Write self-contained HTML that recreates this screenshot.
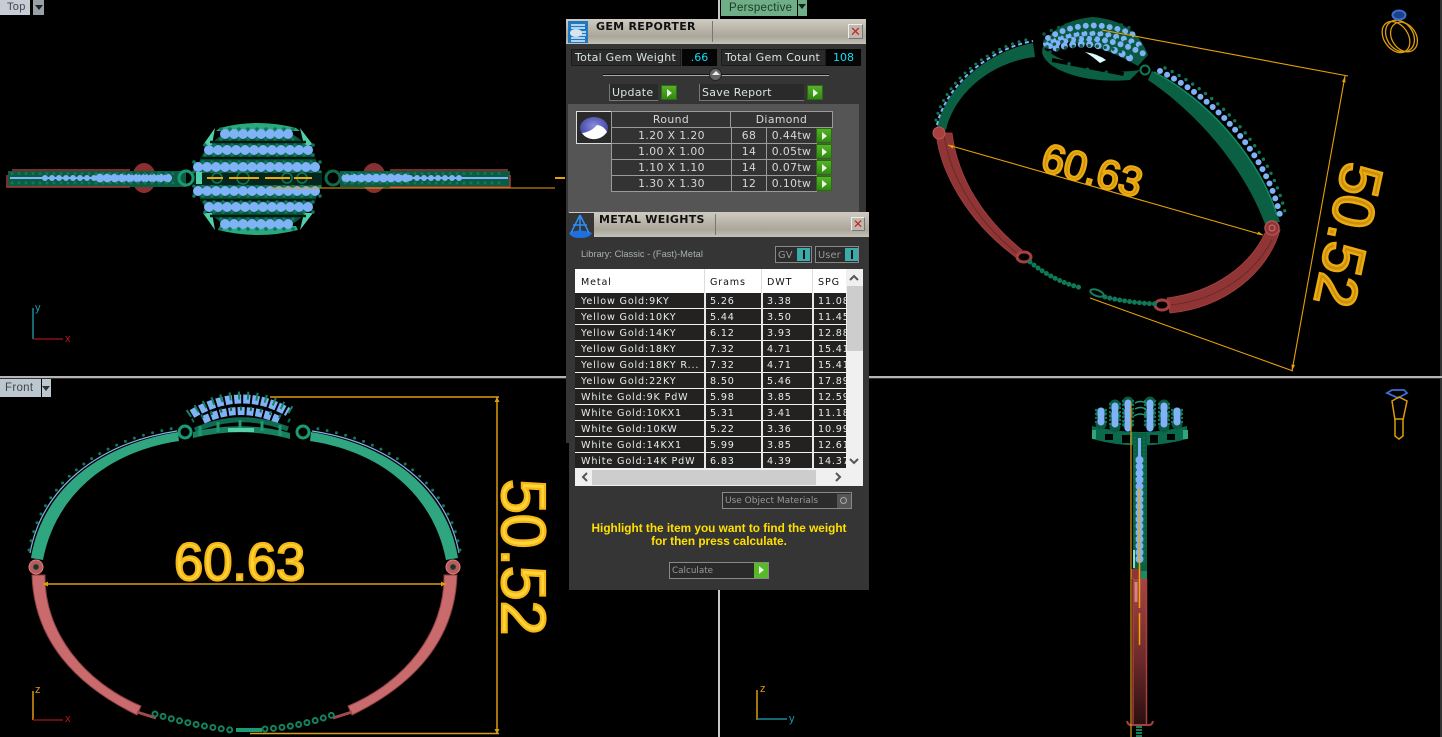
<!DOCTYPE html>
<html><head><meta charset="utf-8"><title>Gem Reporter</title>
<style>
html,body{margin:0;padding:0;background:#000;width:1442px;height:737px;overflow:hidden}
#s{position:absolute;left:0;top:0}
.a{position:absolute;box-sizing:border-box;white-space:nowrap}
body,.a{font-family:"DejaVu Sans","Liberation Sans",sans-serif}
.tab{font:11px "Liberation Sans",sans-serif;color:#444;letter-spacing:.3px}
.panel{background:#353535}
.bar{background:linear-gradient(#cfcbc2,#aaa699 70%,#c5c2b8);height:25px}
.ttl{font:bold 11px "DejaVu Sans",sans-serif;color:#111;letter-spacing:.3px}
.cl{background:#bdb9ae;border:1px solid #eee;border-right-color:#777;border-bottom-color:#777;color:#c22;font:13px/13px "Liberation Sans",sans-serif;text-align:center}
.t{font-size:11px;color:#d8e6de;line-height:15px;letter-spacing:.25px}
.box{background:#2a2a2a;border:1px solid #1a1a1a;padding-left:3px}
.val{background:#050505;color:#12dcf5;text-align:center;font-size:11px;line-height:17px}
.g{background:linear-gradient(#57b02a,#2f8a12);border:1px solid #2a6a10}
.g:after{content:"";position:absolute;left:5px;top:3px;border-left:5px solid #e8f5e0;border-top:4px solid transparent;border-bottom:4px solid transparent}
.c{background:#333;border:1px solid #9a9a9a;color:#d8d8d8;font-size:10.8px;line-height:16px;text-align:center;letter-spacing:.4px}
.r{position:absolute;left:575px;width:271px;height:15px;background:#242220;overflow:hidden}
.r span{position:absolute;top:1px;font-size:9.6px;line-height:16px;color:#e6edf0;letter-spacing:.85px}
.r span:nth-child(1){left:6px}.r span:nth-child(2){left:135px}.r span:nth-child(3){left:192px}.r span:nth-child(4){left:243px}
.v{position:absolute;top:293px;width:2px;height:175px;background:#e8e8e8}
.h{font-size:9.6px;color:#111;letter-spacing:.85px}
.lb{font-size:9.8px;color:#999;letter-spacing:.1px;line-height:17px}
.tg{border:1px solid #888;background:#2c2c2c}
</style></head><body>
<svg id="s" width="1442" height="737" viewBox="0 0 1442 737" font-family="'Liberation Sans',sans-serif">
<defs>
<style>
.dot{fill:none;stroke-linecap:round}
.bl{stroke:#7fb2f7}.gr{stroke:#0f7a58}.dk{stroke:#0a5a42}
.o{fill:none;stroke:#dc9c0c}
</style>
<g id="fg"><path d="M31 558C42 490 98 445 178 432L179 441C105 452 55 497 43 560Z" fill="#2fa680"/>
<path d="M30 553C42 488 98 443 177 431" fill="none" stroke="#86aef0" stroke-width="1.200"/>
<path class="dot gr" d="M29 550C41 484 98 440 176 428" stroke-width="3" stroke-dasharray="0 9.500"/></g>
<g id="fr"><path d="M32 575C34 640 75 685 137 715L141 706C84 682 44 632 45 575Z" fill="#c96a6c" stroke="#8e4042" stroke-width="1"/>
<path d="M137 712L156 718" stroke="#a04a4c" stroke-width="3"/>
<circle cx="36" cy="567" r="7" fill="#b95a5c" stroke="#e08080"/><circle cx="36" cy="567" r="2.500" fill="#402020" stroke="#0a5a42"/></g>
<radialGradient id="gm" cx=".5" cy=".4" r=".6"><stop offset="0" stop-color="#8a8ee0"/><stop offset="1" stop-color="#3a3f9a"/></radialGradient>
<linearGradient id="rd" x1="0" y1="0" x2="0" y2="1"><stop offset="0" stop-color="#a84444"/><stop offset=".55" stop-color="#6e2a2a"/><stop offset="1" stop-color="#2a1010"/></linearGradient>
</defs>
<rect width="1442" height="737" fill="#000"/>
<rect x="1440" width="2" height="737" fill="#333"/>

<!-- TOP VIEW -->
<ellipse cx="144" cy="178" rx="12" ry="15" fill="#8a2f2f"/><ellipse cx="374" cy="178" rx="12" ry="15" fill="#8a2f2f"/>
<rect x="8" y="171" width="178" height="16" fill="#0b5c42"/><rect x="340" y="171" width="170" height="16" fill="#0b5c42"/>
<path d="M12 170H130M7 175V187H130M390 170H508M510 175V187H390" fill="none" stroke="#a83a3a" stroke-width="1.500"/>
<path d="M10 178H172M344 178H508" stroke="#7fb2f7" stroke-width="2"/>
<path class="dot bl" d="M45 178H100M410 178H465" stroke-width="6" stroke-dasharray="0 7"/>
<path class="dot bl" d="M100 178H172M346 178H410" stroke-width="9" stroke-dasharray="0 7.500"/>
<path class="dot gr" d="M12 173.500H180M345 173.500H505M12 183H180M345 183H505" stroke-width="3" stroke-dasharray="0 7"/>
<ellipse cx="258" cy="179" rx="62" ry="54" fill="#0a5540"/>
<path d="M220 128Q258 118 296 128L300 131H216ZM218 230Q258 240 298 230L296 226H220Z" fill="#2aa880"/>
<path d="M203 145L215 128L212 145ZM313 145L300 128L304 145ZM203 213L215 230L212 213ZM313 213L300 230L304 213Z" fill="#50d0a8"/>
<path d="M210 142H306M200 158H316M200 200H316M210 216H306" stroke="#021a12" stroke-width="2.500"/>
<g class="dot" fill="none" stroke-linecap="round">
<path class="bl" stroke-width="10" stroke-dasharray="0 9" d="M225 134H295M209 150H313M198 167H320M198 191H320M209 207H313M225 224H295"/>
<path class="gr" stroke-width="3.600" stroke-dasharray="0 9" d="M221 129H297M221 139H297M205 145H315M205 155H315M194 162H324M194 172H324M194 186H324M194 196H324M205 202H315M205 212H315M221 219H297M221 229H297"/>
</g>
<rect x="194" y="173" width="128" height="12" fill="#05261c"/>
<rect x="196" y="172" width="6" height="12" fill="#55d0a8"/>
<g fill="none" stroke="#0f7a58" stroke-width="1.500"><circle cx="217" cy="178" r="5"/><circle cx="243" cy="178" r="6"/><circle cx="287" cy="178" r="5"/><circle cx="302" cy="178" r="5"/></g>
<circle cx="186" cy="178" r="7" fill="none" stroke="#1a9a74" stroke-width="3"/><circle cx="333" cy="178" r="7" fill="none" stroke="#0f6a50" stroke-width="3"/>
<path d="M207 178H223M229 178H259M265 178H290M294 178H312" stroke="#f0a808" stroke-width="2"/>
<path d="M270 188H555" stroke="#e8a00a" stroke-width="1.100"/>
<path d="M555 178H565" stroke="#e8a00a" stroke-width="2"/>
<path d="M33 308V339" stroke="#1a8a9a" stroke-width="1.500"/><path d="M33 339H63" stroke="#8a1010" stroke-width="1.500"/>
<text x="35" y="311" font-size="11" fill="#1a9aaa">y</text><text x="65" y="342" font-size="11" fill="#c01818">x</text>

<!-- FRONT VIEW -->
<use href="#fg"/><use href="#fg" transform="matrix(-1 0 0 1 489 0)"/>
<use href="#fr"/><use href="#fr" transform="matrix(-1 0 0 1 489 0)"/>
<path d="M192 414Q241 385 288 412" fill="none" stroke="#7fb2f7" stroke-width="9" stroke-dasharray="7 2"/>
<path d="M203 420Q241 402 279 420" fill="none" stroke="#7fb2f7" stroke-width="8" stroke-dasharray="7 2"/>
<path d="M188 414Q241 378 294 412" fill="none" stroke="#14805e" stroke-width="8" stroke-dasharray="2 7"/>
<path d="M192 421Q241 396 290 421" fill="none" stroke="#0f6a50" stroke-width="4" stroke-dasharray="2 8"/>
<path d="M195 430Q241 410 288 429" fill="none" stroke="#0f6a50" stroke-width="5"/>
<path d="M193 438Q241 426 290 439L290 433Q241 420 193 432Z" fill="#17805f"/>
<path d="M200 426V436M218 422V432M240 420V430M262 421V431M280 425V436" stroke="#1d9a74" stroke-width="3"/>
<path d="M228 430H254" stroke="#56d0a8" stroke-width="4"/>
<circle cx="185" cy="432" r="6" fill="none" stroke="#1a9a74" stroke-width="3"/><circle cx="303" cy="432" r="6" fill="none" stroke="#1a9a74" stroke-width="3"/>
<path d="M155 714Q190 725 231 730" fill="none" stroke="#14805e" stroke-width="7" stroke-linecap="round" stroke-dasharray="0 8.500"/>
<path d="M155 714Q190 725 231 730" fill="none" stroke="#000" stroke-width="3" stroke-linecap="round" stroke-dasharray="0 8.500"/>
<path d="M265 729Q300 727 335 714" fill="none" stroke="#14805e" stroke-width="7" stroke-linecap="round" stroke-dasharray="0 8.500"/>
<path d="M265 729Q300 727 335 714" fill="none" stroke="#000" stroke-width="3" stroke-linecap="round" stroke-dasharray="0 8.500"/>
<path d="M236 730H262" stroke="#1d9a74" stroke-width="4"/>
<path class="o" stroke-width="1.500" d="M270 397H499M250 733.500H499M497 397V734M43 584H446"/>
<path d="M43 584l5-2.500v5ZM446 584l-5-2.500v5ZM497 397l-2.500 5h5ZM497 734l-2.500-5h5Z" fill="#dc9c0c"/>
<text x="174" y="580" font-size="52.500" fill="#ffd53a" stroke="#f5b616" stroke-width="2.200">60.63</text>
<text transform="translate(502 479) rotate(90)" font-size="62.500" fill="#ffd53a" stroke="#f5b616" stroke-width="2.200">50.52</text>
<path d="M33 691V720" stroke="#dc9c0c" stroke-width="1.500"/><path d="M33 720H63" stroke="#8a1010" stroke-width="1.500"/>
<text x="35" y="693" font-size="11" fill="#dc9c0c">z</text><text x="65" y="722" font-size="11" fill="#c01818">x</text>

<!-- PERSPECTIVE VIEW -->
<path d="M937 127C945 90 985 52 1033 43L1035 57C992 62 955 92 946 130Z" fill="#0b5f42"/>
<path d="M937 125C945 88 985 50 1033 41" fill="none" stroke="#7fb2f7" stroke-width="2" stroke-dasharray="4 3"/>
<path class="dot gr" d="M936 120C944 84 985 48 1030 39" stroke-width="3" stroke-dasharray="0 7"/>
<path d="M1152 71C1205 98 1260 155 1280 222L1265 224C1245 170 1200 115 1148 80Z" fill="#0b5f42"/>
<path d="M1154 72C1205 98 1258 155 1277 215" fill="none" stroke="#0f8a62" stroke-width="1.500"/>
<path class="dot bl" d="M1160 71C1212 97 1265 150 1280 215" stroke-width="6" stroke-dasharray="0 8"/>
<path class="dot gr" d="M1165 68C1217 93 1270 148 1285 212" stroke-width="3.400" stroke-dasharray="0 8"/>
<path d="M936 133C940 170 965 220 1017 258L1022 250C985 220 958 180 952 133Z" fill="#8f3535" stroke="#a84040" stroke-width=".8"/>
<path d="M944 135C950 175 975 220 1018 254" fill="none" stroke="#6e2828" stroke-width="1"/>
<path d="M1280 230C1268 272 1225 308 1170 313L1167 298C1215 292 1250 265 1265 233Z" fill="#8f3535" stroke="#a84040" stroke-width=".8"/>
<path d="M1272 240C1255 272 1220 300 1170 305" fill="none" stroke="#6e2828" stroke-width="1"/>
<circle cx="939" cy="133" r="6" fill="#a84040" stroke="#c05858"/><circle cx="1272" cy="228" r="7" fill="#8f3535" stroke="#b05050" stroke-width="1.500"/><circle cx="1272" cy="228" r="3" fill="none" stroke="#d07070"/>
<ellipse cx="1024" cy="257" rx="7" ry="5" fill="none" stroke="#a84040" stroke-width="3"/><ellipse cx="1162" cy="305" rx="7" ry="5" fill="none" stroke="#a84040" stroke-width="3"/>
<path d="M1030 262Q1055 282 1082 288M1105 297Q1130 303 1158 304" fill="none" stroke="#0f7a58" stroke-width="5" stroke-linecap="round" stroke-dasharray="0 5"/>
<ellipse cx="1097" cy="293" rx="7" ry="3" transform="rotate(20 1097 293)" fill="none" stroke="#14805e" stroke-width="2"/>
<path d="M1042 52C1045 70 1085 84 1130 80L1140 70C1100 76 1060 62 1043 48Z" fill="#0b5f42"/>
<path d="M1052 60L1124 74" stroke="#000" stroke-width="4" stroke-dasharray="16 3"/>
<path d="M1042 50Q1050 22 1092 17Q1135 20 1148 55L1138 66Q1100 44 1068 42Q1052 44 1042 50Z" fill="#0a5a42"/>
<g fill="none" stroke-linecap="round">
<path class="bl" stroke-width="6" stroke-dasharray="0 8" d="M1048 38Q1090 14 1136 36M1046 44Q1092 22 1142 46M1050 46Q1095 28 1146 55"/>
<path class="bl" stroke-width="7" stroke-dasharray="0 8.500" d="M1056 48Q1098 36 1136 62"/>
<path class="dk" stroke-width="3.400" stroke-dasharray="0 8" d="M1044 34Q1090 10 1135 30M1045 41Q1092 18 1143 42M1047 47Q1095 26 1147 50M1050 52Q1095 36 1140 60"/>
</g>
<path d="M1085 52Q1098 54 1106 60L1100 63Q1092 56 1085 52Z" fill="#dff"/>
<circle cx="1145" cy="70" r="4.500" fill="none" stroke="#0f7a58" stroke-width="2"/>
<path d="M948 145L1263 235M1102 30L1348 76M1090 298L1293 371M1345 76L1292 371" fill="none" stroke="#e6a008" stroke-width="1.100"/>
<path d="M948 145l6 .5-1.500 3ZM1263 235l-6-.5 1.500-3ZM1345 76l-3 6 3.500 .5ZM1292 371l3-6-3.500-.5Z" fill="#e6a008"/>
<text transform="translate(1039 170) rotate(15.500)" font-size="41" fill="#c8900c" stroke="#ecaa10" stroke-width="2.200">60.63</text>
<text transform="translate(1344 160) rotate(102)" font-size="58" fill="#c8900c" stroke="#ecaa10" stroke-width="2.400">50.52</text>
<g fill="none" stroke="#dc9c0c" stroke-width="1.300"><ellipse cx="1396" cy="37" rx="12" ry="17" transform="rotate(-35 1396 37)"/><ellipse cx="1400" cy="36" rx="13" ry="17" transform="rotate(-35 1400 36)"/><ellipse cx="1404" cy="37" rx="12" ry="16" transform="rotate(-35 1404 37)"/></g>
<ellipse cx="1399" cy="15" rx="6.500" ry="4.500" fill="#1d3f88" stroke="#3a6fd0" stroke-width="2"/>

<!-- RIGHT VIEW -->
<path d="M1092 426Q1140 438 1187 426L1187 439Q1140 452 1092 439Z" fill="#0c6a4c"/>
<path d="M1105 434h8v6h-8ZM1122 435h8v8h-8ZM1150 435h8v8h-8ZM1167 434h8v6h-8Z" fill="#000"/>
<rect x="1092" y="430" width="4" height="9" fill="#2fa680"/><rect x="1183" y="430" width="5" height="9" fill="#2fa680"/>
<g fill="none" stroke-linecap="round">
<path class="dk" stroke-width="11" stroke-dasharray="0 11" d="M1101 413V428M1115 405V428M1128 402V428M1150 402V428M1164 405V428M1177 413V428"/>
<path class="bl" stroke-width="7" stroke-dasharray="4 3" d="M1101 411V425M1115 406V425M1128 403V428M1150 403V428M1164 406V425M1177 411V425"/>
<path class="gr" stroke-width="2.400" stroke-dasharray="0 4" d="M1096 410V425M1106 410V425M1110 404V425M1120 404V425M1123 401V426M1133 401V426M1145 401V426M1155 401V426M1159 404V425M1169 404V425M1172 410V425M1182 410V425"/>
</g>
<path d="M1135 403Q1140 400 1146 403M1135 409Q1140 406 1146 409M1134 416Q1140 412 1147 416" fill="none" stroke="#1d9a74" stroke-width="1.500"/>
<rect x="1133" y="433" width="14" height="145" fill="#0b5f42"/>
<path d="M1139.500 438V500" stroke="#7fb2f7" stroke-width="3"/>
<path class="dot" d="M1139.500 460V565" stroke="#7fb2f7" stroke-width="8" stroke-dasharray="0 6.600"/>
<path class="dot gr" d="M1135 438V565M1144 438V565" stroke-width="1.800" stroke-dasharray="0 4"/>
<path d="M1134 550V568" stroke="#bff" stroke-width="1.500"/>
<rect x="1133" y="578" width="14" height="146" fill="url(#rd)"/>
<rect x="1131" y="569" width="10" height="10" fill="#8f3535"/><rect x="1141" y="571" width="6" height="8" fill="#1d8a66"/>
<path d="M1133 578V724M1146.500 578V724" stroke="#a84040" stroke-width="1.500"/>
<path d="M1136 582V602" stroke="#f0a0a0" stroke-width="3" opacity=".7"/>
<path d="M1127 721Q1128 726 1133 725H1147Q1152 726 1153 721" fill="none" stroke="#a84040" stroke-width="2"/>
<path d="M1139 726V737" stroke="#14805e" stroke-width="6" stroke-dasharray="2 1"/>
<path d="M1131 403V737" stroke="#dc9c0c" stroke-width="1.200"/>
<path d="M1139.500 488V608M1139.500 613V645" stroke="#f0a808" stroke-width="1.500"/>
<path d="M757 690V720" stroke="#dc9c0c" stroke-width="1.500"/><path d="M757 719H787" stroke="#1a8a9a" stroke-width="1.500"/>
<text x="760" y="692" font-size="11" fill="#dc9c0c">z</text><text x="789" y="722" font-size="11" fill="#1a9aaa">y</text>
<path d="M1387 393L1392 390H1404L1407 393L1398 398Z" fill="none" stroke="#3a6fd0" stroke-width="1.800"/>
<path d="M1392 401L1399 397L1407 401L1403 420V436L1399 439L1395 436V420Z M1395 419H1403" fill="none" stroke="#dc9c0c" stroke-width="1.500"/>

<!-- Dividers -->
<rect x="0" y="376" width="1442" height="2" fill="#b5b5b5"/>
<rect x="718" y="0" width="2" height="737" fill="#c8c8c8"/>
<rect x="0" y="378" width="1442" height="1" fill="#333"/>
</svg>

<!-- view tabs -->
<div class="a tab" style="left:0;top:0;width:30px;height:15px;background:#c6cdd6;padding-left:7px;line-height:15px">Top</div>
<div class="a" style="left:33px;top:0;width:11px;height:15px;background:#98a0a8"></div>
<div class="a" style="left:35px;top:5px;border-top:5px solid #222;border-left:4px solid transparent;border-right:4px solid transparent"></div>
<div class="a tab" style="left:721px;top:0;width:76px;height:16px;background:#6fae86;color:#1c3a28;padding-left:8px;line-height:16px;font-size:11.500px">Perspective</div>
<div class="a" style="left:798px;top:0;width:9px;height:16px;background:#6fae86"></div>
<div class="a" style="left:798px;top:4px;border-top:5px solid #122;border-left:4px solid transparent;border-right:4px solid transparent"></div>
<div class="a tab" style="left:0;top:379px;width:41px;height:18px;background:#bcc8d0;padding-left:5px;line-height:18px;font-size:11.500px">Front</div>
<div class="a" style="left:42px;top:379px;width:9px;height:18px;background:#bcc8d0"></div>
<div class="a" style="left:42px;top:386px;border-top:5px solid #333;border-left:4px solid transparent;border-right:4px solid transparent"></div>

<!-- GEM REPORTER -->
<div class="a panel" style="left:566px;top:19px;width:300px;height:424px"></div>
<div class="a bar" style="left:566px;top:19px;width:300px"></div>
<svg class="a" style="left:568px;top:21px" width="20" height="22"><rect width="20" height="22" fill="#1f78c0"/><path d="M3 4h14M3 7h14M11 11h7M11 14h7M3 17h14M3 20h14" stroke="#dfefff" stroke-width="1.500"/><ellipse cx="8" cy="12" rx="6" ry="4" fill="#d8e4ee"/></svg>
<div class="a" style="left:712px;top:21px;width:1px;height:21px;background:#777"></div>
<div class="a ttl" style="left:596px;top:20px">GEM REPORTER</div>
<div class="a cl" style="left:848px;top:24px;width:15px;height:15px">✕</div>
<div class="a t box" style="left:571px;top:49px;width:110px;height:17px">Total Gem Weight</div>
<div class="a val" style="left:682px;top:49px;width:35px;height:17px">.66</div>
<div class="a t box" style="left:721px;top:49px;width:105px;height:17px">Total Gem Count</div>
<div class="a val" style="left:826px;top:49px;width:35px;height:17px">108</div>
<div class="a" style="left:603px;top:75px;width:226px;height:1px;background:#aaa"></div>
<div class="a" style="left:603px;top:74px;width:226px;height:1px;background:#111"></div>
<div class="a" style="left:709px;top:68px;width:13px;height:13px;border-radius:50%;background:#666;border:1px solid #222"></div>
<div class="a" style="left:712px;top:71px;border-bottom:4px solid #eee;border-left:4px solid transparent;border-right:4px solid transparent"></div>
<div class="a t" style="left:609px;top:84px;width:49px;height:17px;background:#2a2a2a;border-left:1px solid #777;border-bottom:1px solid #777;padding-left:2px;line-height:18px">Update</div>
<div class="a g" style="left:661px;top:85px;width:16px;height:15px"></div>
<div class="a t" style="left:699px;top:84px;width:105px;height:17px;background:#2a2a2a;border-left:1px solid #777;border-bottom:1px solid #777;padding-left:2px;line-height:18px">Save Report</div>
<div class="a g" style="left:807px;top:85px;width:16px;height:15px"></div>
<div class="a" style="left:568px;top:104px;width:291px;height:110px;background:#555"></div>
<svg class="a" style="left:576px;top:111px;border:1px solid #ddd;background:#2a2a2a;box-sizing:border-box" width="36" height="33"><ellipse cx="17" cy="16" rx="14" ry="11" fill="url(#gm)"/><path d="M5 21Q14 20 20 13Q27 14 30 20Q24 28 15 27Q8 26 5 21Z" fill="#fff"/></svg>
<div class="a c" style="left:611px;top:111px;width:120px;height:17px">Round</div>
<div class="a c" style="left:730px;top:111px;width:103px;height:17px">Diamond</div>
<div class="a c" style="left:611px;top:127px;width:121px;height:17px">1.20 X 1.20</div><div class="a c" style="left:731px;top:127px;width:36px;height:17px">68</div><div class="a c" style="left:766px;top:127px;width:51px;height:17px">0.44tw</div><div class="a g" style="left:816px;top:128px;width:16px;height:15px"></div>
<div class="a c" style="left:611px;top:143px;width:121px;height:17px">1.00 X 1.00</div><div class="a c" style="left:731px;top:143px;width:36px;height:17px">14</div><div class="a c" style="left:766px;top:143px;width:51px;height:17px">0.05tw</div><div class="a g" style="left:816px;top:144px;width:16px;height:15px"></div>
<div class="a c" style="left:611px;top:159px;width:121px;height:17px">1.10 X 1.10</div><div class="a c" style="left:731px;top:159px;width:36px;height:17px">14</div><div class="a c" style="left:766px;top:159px;width:51px;height:17px">0.07tw</div><div class="a g" style="left:816px;top:160px;width:16px;height:15px"></div>
<div class="a c" style="left:611px;top:175px;width:121px;height:17px">1.30 X 1.30</div><div class="a c" style="left:731px;top:175px;width:36px;height:17px">12</div><div class="a c" style="left:766px;top:175px;width:51px;height:17px">0.10tw</div><div class="a g" style="left:816px;top:176px;width:16px;height:15px"></div>

<!-- METAL WEIGHTS -->
<div class="a panel" style="left:569px;top:212px;width:300px;height:378px"></div>
<div class="a bar" style="left:569px;top:212px;width:300px"></div>
<svg class="a" style="left:568px;top:213px" width="26" height="25"><rect width="26" height="25" fill="#353535"/><path d="M1 20Q12 15 24 20Q22 25 12 25Q3 25 1 20Z" fill="#1e6fe0"/><path d="M12 2L3 20M12 2L21 20M5 12H19M12 2V18" stroke="#2a90ff" stroke-width="1.500" fill="none"/></svg>
<div class="a" style="left:715px;top:214px;width:1px;height:21px;background:#777"></div>
<div class="a ttl" style="left:599px;top:213px">METAL WEIGHTS</div>
<div class="a cl" style="left:851px;top:217px;width:14px;height:14px;font-size:12px">✕</div>
<div class="a" style="left:581px;top:248px;font:9.300px/12px 'Liberation Sans',sans-serif;color:#a8b0b4">Library: Classic - (Fast)-Metal</div>
<div class="a tg lb" style="left:775px;top:246px;width:37px;height:17px;padding-left:2px">GV</div>
<div class="a" style="left:797px;top:248px;width:13px;height:13px;background:#3aacac"></div><div class="a" style="left:803px;top:250px;width:2px;height:9px;background:#111"></div>
<div class="a tg lb" style="left:815px;top:246px;width:44px;height:17px;padding-left:2px">User</div>
<div class="a" style="left:845px;top:248px;width:13px;height:13px;background:#3aacac"></div><div class="a" style="left:851px;top:250px;width:2px;height:9px;background:#111"></div>

<div class="a" style="left:575px;top:269px;width:288px;height:217px;background:#f0f0f0"></div>
<div class="a" style="left:575px;top:269px;width:271px;height:24px;background:#fff"></div>
<div class="a h" style="left:581px;top:277px">Metal</div><div class="a h" style="left:710px;top:277px">Grams</div><div class="a h" style="left:767px;top:277px">DWT</div><div class="a h" style="left:818px;top:277px">SPG</div>
<div class="a" style="left:704px;top:269px;width:1px;height:24px;background:#ddd"></div><div class="a" style="left:761px;top:269px;width:1px;height:24px;background:#ddd"></div><div class="a" style="left:812px;top:269px;width:1px;height:24px;background:#ddd"></div>
<div class="r" style="top:293px"><span>Yellow Gold:9KY</span><span>5.26</span><span>3.38</span><span>11.08</span></div>
<div class="r" style="top:309px"><span>Yellow Gold:10KY</span><span>5.44</span><span>3.50</span><span>11.45</span></div>
<div class="r" style="top:325px"><span>Yellow Gold:14KY</span><span>6.12</span><span>3.93</span><span>12.88</span></div>
<div class="r" style="top:341px"><span>Yellow Gold:18KY</span><span>7.32</span><span>4.71</span><span>15.41</span></div>
<div class="r" style="top:357px"><span>Yellow Gold:18KY R...</span><span>7.32</span><span>4.71</span><span>15.41</span></div>
<div class="r" style="top:373px"><span>Yellow Gold:22KY</span><span>8.50</span><span>5.46</span><span>17.89</span></div>
<div class="r" style="top:389px"><span>White Gold:9K PdW</span><span>5.98</span><span>3.85</span><span>12.59</span></div>
<div class="r" style="top:405px"><span>White Gold:10KX1</span><span>5.31</span><span>3.41</span><span>11.18</span></div>
<div class="r" style="top:421px"><span>White Gold:10KW</span><span>5.22</span><span>3.36</span><span>10.99</span></div>
<div class="r" style="top:437px"><span>White Gold:14KX1</span><span>5.99</span><span>3.85</span><span>12.61</span></div>
<div class="r" style="top:453px"><span>White Gold:14K PdW</span><span>6.83</span><span>4.39</span><span>14.37</span></div>
<div class="v" style="left:704px"></div><div class="v" style="left:761px"></div><div class="v" style="left:812px"></div>
<div class="a" style="left:847px;top:286px;width:16px;height:65px;background:#cdcdcd"></div>
<div class="a" style="left:592px;top:470px;width:224px;height:15px;background:#cdcdcd"></div>
<svg class="a" style="left:575px;top:269px" width="288" height="217" fill="none" stroke="#555" stroke-width="2"><path d="M275 11l4-4 4 4M275 190l4 4 4-4M12 204l-4 4 4 4M261 204l4 4-4 4"/></svg>
<div class="a" style="left:722px;top:492px;width:130px;height:17px;border:1px solid #888;background:#2c2c2c;padding-left:2px;line-height:17px;font-size:9px;color:#999">Use Object Materials</div>
<div class="a" style="left:837px;top:494px;width:14px;height:14px;background:#555"></div>
<div class="a" style="left:840px;top:497px;width:7px;height:7px;border:1px solid #aaa;border-radius:50%"></div>
<div class="a" style="left:569px;top:522px;width:300px;text-align:center;font:bold 11.800px/13px 'Liberation Sans',sans-serif;color:#ffe000">Highlight the item you want to find the weight<br>for then press calculate.</div>
<div class="a" style="left:669px;top:562px;width:100px;height:17px;border:1px solid #888;background:#2a2a2a;padding-left:2px;line-height:16px;font-size:8.800px;color:#999">Calculate</div>
<div class="a g" style="left:754px;top:563px;width:14px;height:15px;background:#58b82a;border:0"></div>
</body></html>
